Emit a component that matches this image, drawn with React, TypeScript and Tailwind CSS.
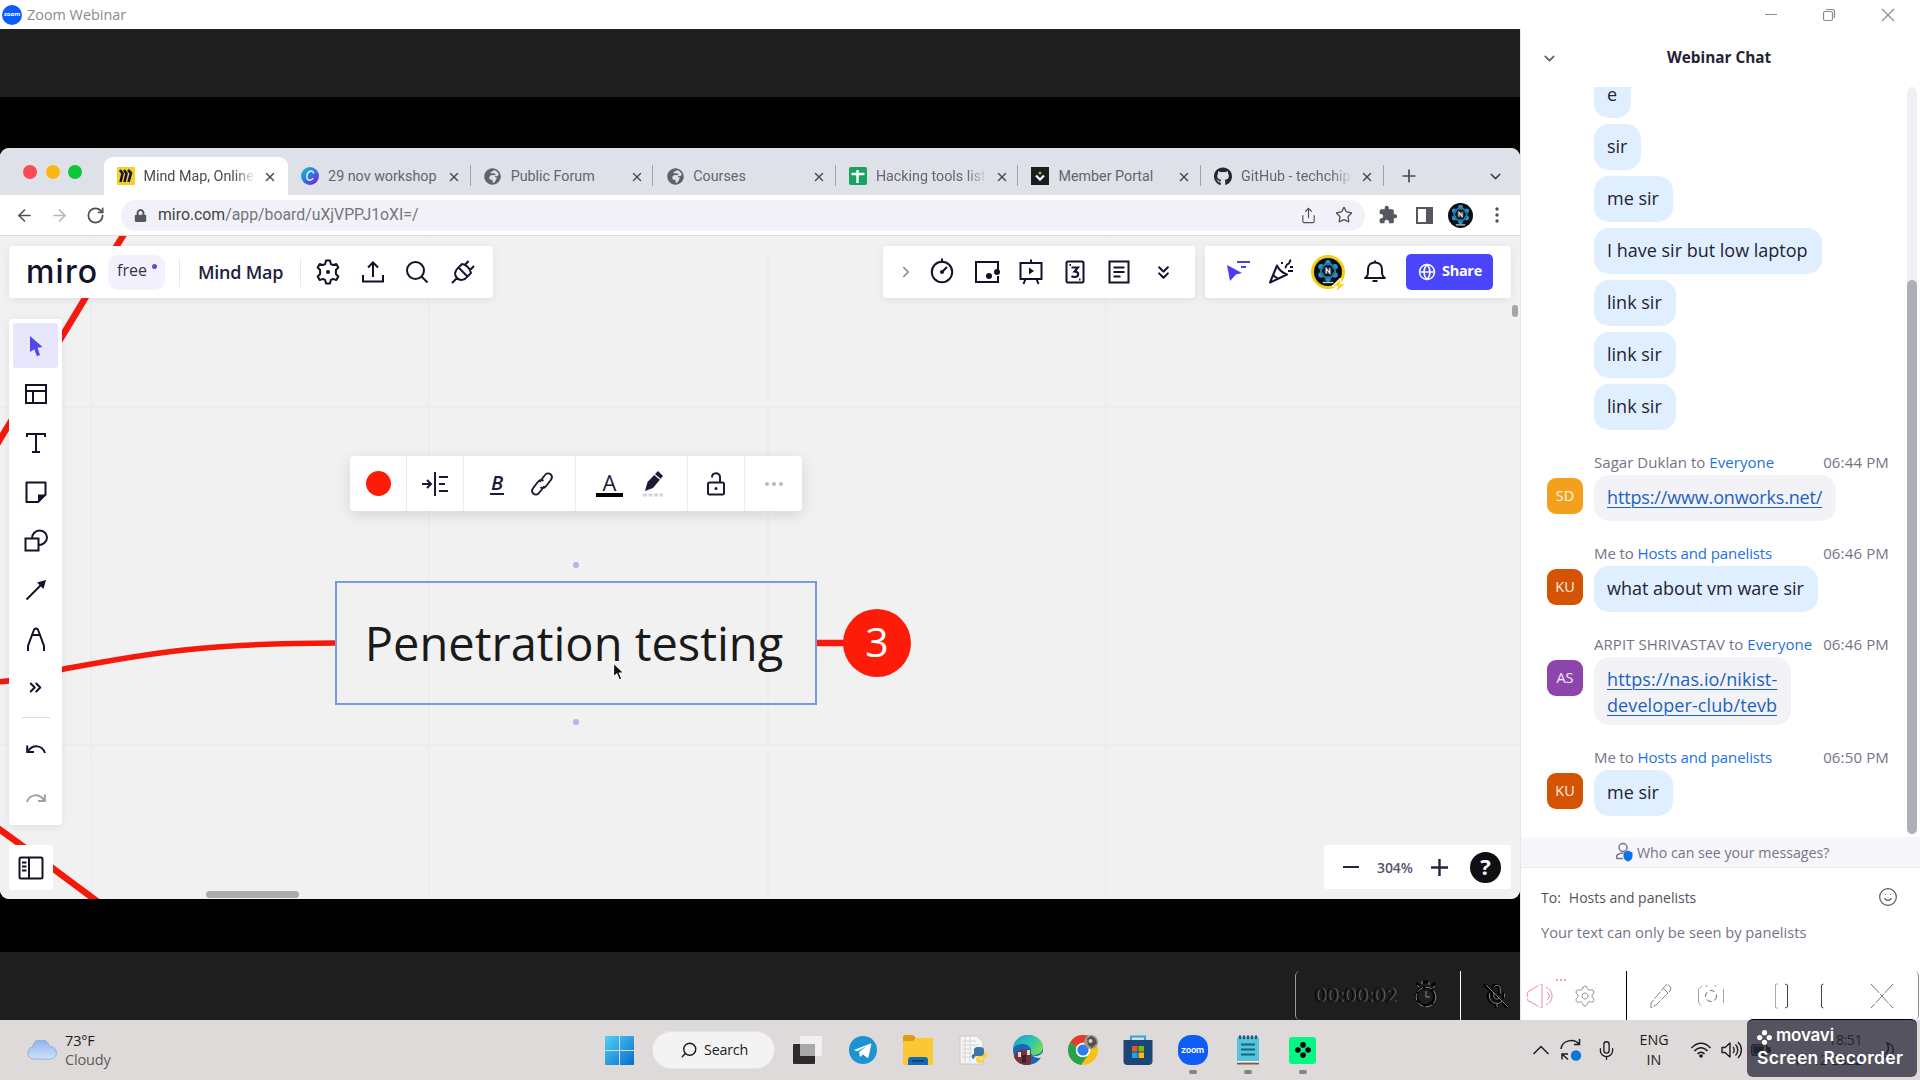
import React from "react";
import {
  ArrowLeft,
  ArrowRight,
  ChevronDown,
  ChevronRight,
  ChevronsDown,
  ChevronsRight,
  Globe,
  Link,
  Mic,
  MicOff,
  Plus,
  RotateCw,
  Search,
  Settings,
  Share,
  Smile,
  Star,
  Volume2,
  X,
} from "lucide-react";
import { FaGithub, FaGlobeAfrica, FaLock } from "react-icons/fa";
import { MdExtension } from "react-icons/md";

type IconProps = { w?: number; h?: number; className?: string; children: React.ReactNode; sw?: number };

function Svg({ w = 24, h = 24, className = "", sw = 2, children }: IconProps) {
  return (
    <svg
      width={w}
      height={h}
      viewBox={`0 0 ${w} ${h}`}
      fill="none"
      stroke="currentColor"
      strokeWidth={sw}
      className={`shrink-0 ${className}`}
    >
      {children}
    </svg>
  );
}

/* ---------- Title bar ---------- */

function TitleBar() {
  return (
    <div className="flex h-[29px] shrink-0 items-center bg-white pl-0.5 text-[#8b8b8b]">
      <div className="flex size-5 items-center justify-center rounded-full bg-[#0b5cff] text-[6px] font-bold text-white">
        zoom
      </div>
      <span className="mt-px ml-[5px] text-[14.4px] leading-none">Zoom Webinar</span>
      <div className="ml-auto flex items-center pr-[25px]">
        <Svg w={12} h={12} sw={1}>
          <path d="M0 5.500h12" />
        </Svg>
        <Svg w={14} h={14} sw={1.2} className="ml-[45px]">
          <rect x="1.500" y="3.500" width="9" height="9" rx="1.500" />
          <path d="M4 1.500h6.500a2 2 0 0 1 2 2V10" />
        </Svg>
        <Svg w={14} h={14} sw={1.2} className="ml-[45px]">
          <path d="M1 1l12 12M13 1L1 13" />
        </Svg>
      </div>
    </div>
  );
}

/* ---------- Shared browser ---------- */

function MiroFavicon() {
  return (
    <Svg w={18} h={18}>
      <rect width="18" height="18" rx="1" fill="#f5d127" stroke="none" />
      <path d="M3 3l2.500 3.500L3.500 15M7 3l2.500 3.500L7.500 15M11 3l3 3-2.500 9" stroke="#1a1428" strokeWidth="2.600" />
    </Svg>
  );
}

function CanvaFavicon() {
  return (
    <Svg w={18} h={18}>
      <defs>
        <linearGradient id="canva" x1="0" y1="0" x2="0.800" y2="1">
          <stop offset="0" stopColor="#0fc0cc" />
          <stop offset="0.450" stopColor="#2586dd" />
          <stop offset="1" stopColor="#7a1ee0" />
        </linearGradient>
      </defs>
      <circle cx="9" cy="9" r="9" fill="url(#canva)" stroke="none" />
      <path d="M12.500 6.500c.2-1.800-1.200-2.600-2.800-2.300-2.700.4-4.300 3.600-3.900 6.300.4 2.900 4 3.700 6.500.8" stroke="#c9ecff" strokeWidth="1.700" />
    </Svg>
  );
}

function SheetsFavicon() {
  return (
    <Svg w={18} h={18}>
      <rect width="18" height="18" rx="2" fill="#16a362" stroke="none" />
      <path d="M2.500 7h13M8.500 3v13" stroke="#fff" strokeWidth="2.400" />
    </Svg>
  );
}

function PortalFavicon() {
  return (
    <Svg w={18} h={18}>
      <rect width="18" height="18" fill="#1d1d1f" stroke="none" />
      <path d="M5 8.500l4 4 4-4" stroke="#f0f0f0" strokeWidth="2.400" />
      <circle cx="9" cy="6" r="1.500" fill="#c9a24a" stroke="none" />
    </Svg>
  );
}

const tabs = [
  { title: "Mind Map, Online", icon: <MiroFavicon />, active: true, fade: true },
  { title: "29 nov workshop", icon: <CanvaFavicon /> },
  { title: "Public Forum", icon: <FaGlobeAfrica size={17} color="#5f6368" /> },
  { title: "Courses", icon: <FaGlobeAfrica size={17} color="#5f6368" /> },
  { title: "Hacking tools list", icon: <SheetsFavicon />, fade: true },
  { title: "Member Portal", icon: <PortalFavicon /> },
  { title: "GitHub - techchip", icon: <FaGithub size={19} color="#24292f" />, fade: true },
];

function TabStrip() {
  return (
    <div className="flex h-[47px] shrink-0 items-end bg-[#dee1e8] font-[Roboto,sans-serif]">
      <div className="mb-4 ml-[23px] flex w-[80.500px] gap-[8.500px]">
        <span className="size-[14px] rounded-full bg-[#fb4a50]" />
        <span className="size-[14px] rounded-full bg-[#fdb714]" />
        <span className="size-[14px] rounded-full bg-[#0fc53a]" />
      </div>
      {tabs.map((t, i) => (
        <div
          key={t.title}
          className={`relative flex h-[38px] shrink-0 items-center ${
            t.active ? "w-[184.600px] rounded-t-[9px] bg-white pl-[13px]" : "w-[182.600px] pl-[13px]"
          }`}
        >
          <span className="flex w-[18px] shrink-0 justify-center">{t.icon}</span>
          <span
            className={`mt-px ml-[9px] w-[111px] overflow-hidden text-[14.300px] whitespace-nowrap ${
              t.active ? "text-[#4a4b52]" : "text-[#63666d]"
            } ${t.fade ? "[mask-image:linear-gradient(to_right,black_82%,transparent)]" : ""}`}
          >
            {t.title}
          </span>
          <X size={14} strokeWidth={2.400} className="mt-px ml-[8px] shrink-0 text-[#46494f]" />
          {i > 0 && <span className="absolute top-2 right-0 h-[21px] w-px bg-[#a0a3a9]" />}
        </div>
      ))}
      <Plus size={20} strokeWidth={2} className="mb-[9px] ml-[15px] text-[#46494f]" />
      <ChevronDown size={17} strokeWidth={2.200} className="mb-[10px] ml-[68px] text-[#46494f]" />
    </div>
  );
}

function ProfileEmblem({ size }: { size: number }) {
  return (
    <svg width={size} height={size} viewBox="0 0 24 24" className="shrink-0">
      <circle cx="12" cy="12" r="12" fill="#0b0e13" />
      <g fill="#2596cf">
        <circle cx="12" cy="4" r="2.300" />
        <circle cx="18" cy="7.500" r="2.300" />
        <circle cx="18" cy="14.500" r="2.300" />
        <circle cx="12" cy="18" r="2.300" />
        <circle cx="6" cy="14.500" r="2.300" />
        <circle cx="6" cy="7.500" r="2.300" />
      </g>
      <circle cx="12" cy="11" r="6" fill="none" stroke="#1f78a8" strokeWidth="1.800" />
      <rect x="9" y="8" width="6" height="6" fill="#3a444d" />
      <path d="M10.500 13V9l3 4V9" fill="none" stroke="#e9eef2" strokeWidth="1" />
      <path d="M7.500 21h9" stroke="#c5ccd2" strokeWidth="1.200" />
    </svg>
  );
}

function AddressBar() {
  return (
    <div className="flex h-[41px] shrink-0 items-center border-b border-[#dcdce0] bg-white pl-[15px] text-[#4d5056]">
      <ArrowLeft size={19} />
      <ArrowRight size={19} className="ml-[16px] text-[#b4b6ba]" />
      <RotateCw size={19} strokeWidth={2.200} className="ml-[17px]" />
      <div className="ml-[16px] flex h-[31px] w-[1244px] items-center rounded-full bg-[#f1f1f7] pr-[12px] pl-[13px]">
        <FaLock size={13} color="#55585e" />
        <span className="ml-[11px] font-[Roboto,sans-serif] text-[15.800px] whitespace-nowrap text-[#73767c]">
          <span className="text-[#404248]">miro.com</span>/app/board/uXjVPPJ1oXI=/
        </span>
        <Share size={17} strokeWidth={1.600} className="ml-auto" />
        <Star size={18} strokeWidth={1.800} className="ml-[18px]" />
      </div>
      <MdExtension size={20} className="ml-[13px]" color="#55585e" />
      <Svg w={17} h={17} className="ml-[18px] text-[#55585e]">
        <rect x="1" y="1" width="15" height="15" />
        <path d="M10 1h6v15h-6z" fill="currentColor" stroke="none" />
      </Svg>
      <span className="ml-[15px]">
        <ProfileEmblem size={25} />
      </span>
      <Svg w={6} h={18} className="ml-[21px]">
        <g fill="currentColor" stroke="none">
          <circle cx="3" cy="3" r="1.700" />
          <circle cx="3" cy="9" r="1.700" />
          <circle cx="3" cy="15" r="1.700" />
        </g>
      </Svg>
    </div>
  );
}

/* ---------- Miro board ---------- */

function BoardLines() {
  return (
    <svg width="1520" height="663" viewBox="0 236 1520 663" className="absolute inset-0" fill="none">
      <g stroke="#ececee" strokeWidth="1.500">
        <path d="M91 235V899M429 235V899M768 235V899M1106 235V899M0 407H1520M0 745H1520" />
      </g>
      <g stroke="#f5190c" strokeWidth="6.500">
        <path d="M126 231C105 264 88 294 58 343C40 374 22 403 -4 446" />
        <path d="M-2 682C20 680 45 674 64 669C140 655 200 643 336 643" strokeWidth="5.500" />
        <path d="M-4 827C30 851 60 874 98 902" />
        <path d="M817 643H850" />
      </g>
    </svg>
  );
}

function FileBar() {
  return (
    <div className="absolute top-[10px] left-[9px] flex h-[52px] w-[484px] items-center rounded-[3px] bg-white text-[#12122a] shadow-[0_2px_8px_rgba(5,0,56,0.07)]">
      <span className="ml-[17px] w-[73px] font-[Inter,sans-serif] text-[32px] leading-none font-medium tracking-[1.200px]">
        miro
      </span>
      <div className="relative ml-[9px] flex h-[35px] w-[57px] items-center rounded-[10px] bg-[#f3f1fb] pl-[9px]">
        <span className="-mt-1 text-[16px] font-medium text-[#33334d]">free</span>
        <span className="absolute top-[9px] right-[8px] size-[5px] rounded-full bg-[#5a4ce0]" />
      </div>
      <span className="ml-[14px] h-[29px] w-px bg-[#e9e9ef]" />
      <span className="ml-[18px] w-[85px] text-[18px] font-semibold tracking-[-0.250px] whitespace-nowrap text-[#22223a]">
        Mind Map
      </span>
      <span className="ml-[17px] h-[29px] w-px bg-[#e9e9ef]" />
      <Svg w={24} h={26} className="ml-[15px]">
        <path
          d="M10 1.500h4l.8 3.400 2.200 1.200 3.300-1.200 2 3.600-2.400 2.500v4l2.400 2.500-2 3.600-3.300-1.200-2.200 1.200-.8 3.400h-4l-.8-3.400L7 19.900l-3.300 1.200-2-3.600L4.100 15v-4L1.700 8.500l2-3.600L7 6.100l2.200-1.200z"
          strokeLinejoin="round"
        />
        <circle cx="12" cy="13" r="2" fill="currentColor" stroke="none" />
      </Svg>
      <Svg w={24} h={24} className="ml-[21px]">
        <path d="M2 15v6.500h20V15M12 17V3M7 7.500L12 2.500l5 5" />
      </Svg>
      <Svg w={24} h={24} className="ml-[20px]">
        <circle cx="10.500" cy="10.500" r="8.500" />
        <path d="M16.500 16.500l6 6" />
      </Svg>
      <Svg w={26} h={26} className="ml-[21px]">
        <path d="M8.500 8.500l9 9c-3 4-7.500 4.500-10.500 1.500s-2.500-7.500 1.500-10.500zM8.500 8.500L12 5c4 .5 8.500 4.500 9 9l-3.500 3.500M7 19l-5 5M14.500 6.500l4-4.500M19.500 11.500l4.500-4.500" />
      </Svg>
    </div>
  );
}

function ToolsBar() {
  return (
    <div className="absolute top-[10px] left-[883px] flex h-[52px] w-[312px] items-center rounded-[3px] bg-white text-[#12122a] shadow-[0_2px_8px_rgba(5,0,56,0.07)]">
      <ChevronRight size={18} className="ml-[14px] text-[#85858f]" />
      <Svg w={24} h={26} className="-mt-0.5 ml-[15px]">
        <circle cx="12" cy="14" r="10.200" />
        <path d="M12 0.500v4M12 14l5-5" />
        <circle cx="12" cy="14" r="2" fill="currentColor" stroke="none" />
      </Svg>
      <Svg w={26} h={24} className="ml-[20px]">
        <path d="M24 16v6H2V2h22v9" />
        <circle cx="15" cy="16" r="3" fill="currentColor" stroke="none" />
        <circle cx="23" cy="12" r="3" fill="currentColor" stroke="none" />
      </Svg>
      <Svg w={24} h={26} className="ml-[19px]">
        <rect x="1.500" y="4" width="21" height="16" />
        <path d="M12 0.500V4M6.500 20l-2 5M17.500 20l2 5" />
        <path d="M10 8.500l5 3.500-5 3.500z" fill="currentColor" stroke="none" />
      </Svg>
      <Svg w={20} h={24} className="ml-[22px]">
        <rect x="1.500" y="1.500" width="17" height="21" rx="1.500" />
        <path d="M6.500 7.500H13l-3.500 4c5 0 5 5.500 0 5.500-1.500 0-2.500-.5-3-1" />
        <path d="M4.500 5h1.500M14 19.500h1.500" />
      </Svg>
      <Svg w={22} h={24} className="ml-[23px]">
        <rect x="1.500" y="1.500" width="19" height="21" />
        <path d="M5.500 7.500h11M5.500 12h11M5.500 16.500h7" />
      </Svg>
      <ChevronsDown size={21} strokeWidth={2.400} className="ml-[23px]" />
    </div>
  );
}

function ShareBar() {
  return (
    <div className="absolute top-[10px] left-[1205px] flex h-[52px] w-[306px] items-center rounded-[3px] bg-white text-[#12122a] shadow-[0_2px_8px_rgba(5,0,56,0.07)]">
      <Svg w={24} h={22} className="-mt-0.5 ml-[21px] text-[#4a3ff0]">
        <path d="M1 5l15 8-6 1.500L4 21z" fill="currentColor" stroke="none" />
        <path d="M11 2h13M15 7h5" />
      </Svg>
      <Svg w={26} h={26} className="ml-[18px]">
        <path d="M9 6.500l-7 17 17-8c-4-1.500-8-4.500-10-9zM5 16l5 4M17 9c1.500-1 1-4 3-4s1-3 3-4" strokeLinejoin="round" />
        <path d="M20 12h5M22 8h3M14 3v2" />
      </Svg>
      <div className="relative ml-[17px] flex size-[34px] items-center justify-center rounded-full bg-[#f2d013]">
        <ProfileEmblem size={28} />
        <svg width="14" height="15" viewBox="0 0 13 14" className="absolute -right-px -bottom-1">
          <path d="M8 0L0 8h5l-2 6 10-9H8z" fill="#ffd52a" stroke="#fff" strokeWidth="1" />
        </svg>
      </div>
      <Svg w={22} h={24} className="ml-[19px]">
        <path d="M1 18c3-2 3-3 3-8.500C4 5 7 2.500 11 2.500s7 2.500 7 7c0 5.500 0 6.500 3 8.500zM8.500 21h5" strokeLinejoin="round" />
        <path d="M11 0.500v2" />
      </Svg>
      <div className="ml-[20px] flex h-[36px] w-[87px] items-center rounded-[5px] bg-[#4a45fb] pl-[12px] text-white">
        <Globe size={18} strokeWidth={2} />
        <span className="-mt-0.5 ml-[6px] text-[14.500px] font-bold tracking-[-0.3px]">Share</span>
      </div>
    </div>
  );
}

const sideIcons = [
  <Svg w={22} h={20}>
    <path d="M1 1h20v18H1zM1 7h20M8 7v12" />
  </Svg>,
  <Svg w={22} h={22}>
    <path d="M2 5V2h18v3M11 2v18M7 20h8" />
  </Svg>,
  <Svg w={22} h={22}>
    <path d="M13 21H1.500V1.500h19V13.500z" strokeLinejoin="round" />
    <path d="M13 21.500v-8h8z" fill="currentColor" stroke="none" />
  </Svg>,
  <Svg w={24} h={24}>
    <path d="M1.500 9.500h13v12h-13zM8 9.500c0-4.500 3.500-8 7.500-8s7.500 3 7.500 7-4 7.500-8 7.500" />
  </Svg>,
  <Svg w={22} h={22}>
    <path d="M1.500 20.500L17 5" />
    <path d="M21 1l-2.500 9-6.500-6.500z" fill="currentColor" stroke="none" />
  </Svg>,
  <Svg w={20} h={26}>
    <path d="M2 25v-5l5.500-15c.8-3.500 4.200-3.500 5 0L18 20v5M6.500 9h7" />
  </Svg>,
  <ChevronsRight size={19} strokeWidth={2.500} />,
];

function SideToolbar() {
  return (
    <div className="absolute top-[83px] left-[9px] flex h-[506px] w-[53px] flex-col items-center rounded-[3px] bg-white pt-1 text-[#12122a] shadow-[0_2px_8px_rgba(5,0,56,0.07)]">
      <div className="flex h-[45px] w-[45px] items-center justify-center rounded-[3px] bg-[#e6e6fc]">
        <Svg w={14} h={22} className="text-[#5546e8]">
          <path d="M1 1l12.500 11-5 .7L11 20l-3 1.200-2.800-7L1 17z" fill="currentColor" stroke="none" />
        </Svg>
      </div>
      <div className="mt-px flex flex-col items-center">
        {sideIcons.map((icon, i) => (
          <div key={i} className="flex h-[49px] items-center">
            {icon}
          </div>
        ))}
      </div>
      <span className="mt-[5px] h-px w-[28px] shrink-0 bg-[#dcdce2]" />
      <div className="mt-[6px] flex h-[49px] items-center">
        <Svg w={20} h={12}>
          <path d="M2 8c5-6.500 14-6.500 17 2M1.200 2.500V9H8" />
        </Svg>
      </div>
      <div className="flex h-[49px] items-center text-[#a0a0aa]">
        <Svg w={20} h={12}>
          <path d="M18 8C13 1.500 4 1.500 1 10M18.800 2.500V9H12" />
        </Svg>
      </div>
    </div>
  );
}

function ContextBar() {
  return (
    <div className="absolute top-[220px] left-[350px] flex h-[55px] w-[452px] rounded-[4px] bg-white text-[#1b1b35] shadow-[0_4px_14px_rgba(5,0,56,0.12)]">
      <div className="flex w-[57px] items-center justify-center border-r border-[#ececf0]">
        <span className="size-[25px] rounded-full bg-[#fc1c08]" />
      </div>
      <div className="flex w-[57px] items-center justify-center border-r border-[#ececf0]">
        <Svg w={26} h={24}>
          <path d="M0 12h8M5 8l4 4-4 4M13 0v24M17 5h9M17 12h6M17 19h9" />
        </Svg>
      </div>
      <div className="flex w-[112px] items-center border-r border-[#ececf0] pl-[26px]">
        <span className="border-b-2 border-current px-px text-[20px] leading-[20px] font-semibold italic">B</span>
        <Svg w={22} h={24} className="ml-[27px]" sw={1.900}>
          <path d="M8.500 10l5.500-7c1.500-2 4-2 5.500-.7s1.800 3.700.3 5.700l-5 6.500c-1.500 1.800-3.600 1.900-5.300.7M13.500 14l-5.500 7c-1.500 2-4 2-5.500.7s-1.800-3.700-.3-5.700l5-6.500c1.500-1.800 3.600-1.900 5.300-.7" />
        </Svg>
      </div>
      <div className="flex w-[112px] items-center border-r border-[#ececf0] pl-[20px]">
        <span className="w-[27px] border-b-[4px] border-black text-center text-[22px] leading-[22px] font-medium">A</span>
        <Svg w={22} h={26} className="ml-[19px]">
          <path d="M16 0l5 5-10 12-8 3 2.500-9z" fill="currentColor" stroke="none" />
          <path d="M12.500 3.500l6 5" stroke="#fff" strokeWidth="1.200" />
          <path d="M1 24h20" stroke="#d3d3d9" strokeWidth="3" strokeDasharray="4 1.500" />
        </Svg>
      </div>
      <div className="flex w-[57px] items-center justify-center border-r border-[#ececf0]">
        <Svg w={18} h={24}>
          <rect x="1" y="10.500" width="16" height="12" rx="1.500" />
          <path d="M5 5.500C5 0 13 0 13 5v5.500" />
          <circle cx="9" cy="16.500" r="1.500" fill="currentColor" stroke="none" />
        </Svg>
      </div>
      <div className="flex flex-1 items-center justify-center gap-[3px]">
        <span className="size-[4px] rounded-full bg-[#b9b9c3]" />
        <span className="size-[4px] rounded-full bg-[#b9b9c3]" />
        <span className="size-[4px] rounded-full bg-[#b9b9c3]" />
      </div>
    </div>
  );
}

function Board() {
  return (
    <div className="relative h-[663px] overflow-hidden bg-[#f1f1f2]">
      <BoardLines />
      <FileBar />
      <ToolsBar />
      <ShareBar />
      <span className="absolute top-[69px] right-[2px] h-[12px] w-[6px] rounded-full bg-[#a5a5a8]" />
      <SideToolbar />
      <ContextBar />

      <span className="absolute top-[326px] left-[573px] size-[6px] rounded-full bg-[#b7b2e8]" />
      <span className="absolute top-[483px] left-[573px] size-[6px] rounded-full bg-[#b7b2e8]" />
      <div className="absolute top-[345px] left-[335px] flex h-[124px] w-[482px] items-center justify-center border-2 border-[#7b9ae3] pr-[4px] text-[47px] leading-none whitespace-nowrap text-[#1a1a1a]">
        <span>Penetration testing</span>
      </div>
      <div className="absolute top-[373px] left-[843px] flex size-[68px] items-center justify-center rounded-full bg-[#fc1c08] pb-[3px] text-[41px] leading-none text-white">
        3
      </div>
      <svg width="14" height="20" viewBox="0 0 14 20" className="absolute top-[426px] left-[612px]">
        <path d="M1.500 1v14l3.300-3 2.500 6 2.600-1.100-2.500-5.800H12z" fill="#111" stroke="#fff" strokeWidth="1.200" />
      </svg>

      <div className="absolute top-[609px] left-[9px] flex h-[45px] w-[44px] items-center justify-center rounded-[3px] bg-white text-[#12122a]">
        <Svg w={26} h={24}>
          <rect x="1.500" y="1.500" width="23" height="21" rx="1.500" />
          <path d="M11 1.500v21M4 6.500h4.500M4 10.500h4.500M4 14.500h4.500" />
        </Svg>
      </div>
      <span className="absolute top-[655px] left-[206px] h-[7px] w-[93px] rounded-full bg-[#ababad]" />
      <div className="absolute top-[609px] left-[1324px] flex h-[44px] w-[187px] items-center rounded-[3px] bg-white text-[#24243c]">
        <span className="ml-[19px] h-[2.500px] w-[16px] bg-current" />
        <span className="ml-[18px] w-[37px] text-[14px] font-semibold tracking-[-0.1px] text-[#55556a]">304%</span>
        <Svg w={17} h={17} className="ml-[17px]" sw={2.400}>
          <path d="M8.500 0v17M0 8.500h17" />
        </Svg>
        <span className="ml-[22px] flex size-[31px] items-center justify-center rounded-full bg-[#101012] pb-px text-[22px] font-bold text-white">
          ?
        </span>
      </div>
    </div>
  );
}

function SharedScreen() {
  return (
    <div className="flex w-[1520px] shrink-0 flex-col bg-black">
      <div className="h-[68px] bg-[#1e1e1e]" />
      <div className="mt-[51px] overflow-hidden rounded-[9px] bg-[#f1f1f2]">
        <TabStrip />
        <AddressBar />
        <Board />
      </div>
      <div className="mt-auto h-[68px] bg-[#1e1e1e]" />
    </div>
  );
}

/* ---------- Chat ---------- */

function Bubble({ children, className = "" }: { children: React.ReactNode; className?: string }) {
  return (
    <div className={`w-fit rounded-[15px] pr-[14px] pl-[13px] text-[18px] leading-[25.500px] whitespace-nowrap ${className}`}>
      {children}
    </div>
  );
}

type Message = {
  from: string;
  to: string;
  time: string;
  initials: string;
  avatar: string;
  lines: string[];
  link?: boolean;
};

const messages: Message[] = [
  {
    from: "Sagar Duklan to",
    to: "Everyone",
    time: "06:44 PM",
    initials: "SD",
    avatar: "bg-[#f5a01b]",
    lines: ["https://www.onworks.net/"],
    link: true,
  },
  {
    from: "Me to",
    to: "Hosts and panelists",
    time: "06:46 PM",
    initials: "KU",
    avatar: "bg-[#d45404]",
    lines: ["what about vm ware sir"],
  },
  {
    from: "ARPIT SHRIVASTAV to",
    to: "Everyone",
    time: "06:46 PM",
    initials: "AS",
    avatar: "bg-[#8e44ad]",
    lines: ["https://nas.io/nikist-", "developer-club/tevb"],
    link: true,
  },
  {
    from: "Me to",
    to: "Hosts and panelists",
    time: "06:50 PM",
    initials: "KU",
    avatar: "bg-[#d45404]",
    lines: ["me sir"],
  },
];

function Chat() {
  return (
    <div className="flex w-[400px] flex-col border-l border-[#e6e6ea] bg-white">
      <div className="flex h-[58px] shrink-0 items-center">
        <ChevronDown size={17} strokeWidth={2.400} className="ml-[20px] text-[#5f6070]" />
        <span className="-mt-0.5 ml-[109px] text-[15.300px] font-bold text-[#232333]">Webinar Chat</span>
      </div>

      <div className="flex h-[750px] shrink-0 overflow-hidden">
        <div className="flex w-[386px] shrink-0 flex-col">
          <div className="-mt-[15px] ml-[73px] flex flex-col gap-[6px] text-[#232333]">
            {["e", "sir", "me sir", "I have sir but low laptop", "link sir", "link sir", "link sir"].map((m, i) => (
              <Bubble key={i} className="bg-[#e0efff] pt-[10px] pb-[10.500px]">
                {m}
              </Bubble>
            ))}
          </div>
          {messages.map((m, i) => (
            <div key={i} className="mt-[20px]">
              <div className="ml-[73px] flex h-[25px] w-[295px] items-center justify-between text-[15px] leading-none whitespace-nowrap text-[#747487]">
                <span className={m.to === "Everyone" ? "tracking-[0.050px]" : "tracking-[-0.1px]"}>
                  {m.from} <span className="text-[#1f71dd]">{m.to}</span>
                </span>
                <span className="tracking-[0.150px]">{m.time}</span>
              </div>
              <div className="flex pl-[26px]">
                <span
                  className={`mt-[3px] mr-[11px] flex size-9 items-center justify-center rounded-[9px] text-[14.500px] text-white/90 ${m.avatar}`}
                >
                  {m.initials}
                </span>
                <Bubble
                  className={`pt-[10px] ${m.lines.length > 1 ? "pb-[7px] tracking-[0.1px]" : "pb-[10.500px]"} ${
                    m.link ? "bg-[#f2f2f7] text-[#1b63c0]" : "bg-[#e0efff] text-[#232333]"
                  } ${m.link && m.lines.length === 1 ? "tracking-[-0.150px]" : ""}`}
                >
                  {m.lines.map((l) => (
                    <div key={l} className={m.link ? "underline decoration-1 underline-offset-[3px]" : ""}>
                      {l}
                    </div>
                  ))}
                </Bubble>
              </div>
            </div>
          ))}
        </div>
        <div className="h-[748px] w-[10px] rounded-full bg-[#f1f1f5] pt-[193px]">
          <div className="h-[554px] rounded-full bg-[#aeb0b8]" />
        </div>
      </div>

      <div className="flex h-[31px] shrink-0 items-center border-b border-[#e8e8ef] bg-[#f7f7fb] pl-[94px] text-[14.200px] text-[#747487]">
        <Svg w={18} h={20} sw={1.500}>
          <circle cx="8" cy="5.500" r="4" />
          <path d="M8 16.500H2c-1.500-3 1.500-5.500 6-5.500" />
          <path d="M13 8.500l4.500 2v4c0 2.500-2 4-4.500 5-2.500-1-4.500-2.500-4.500-5v-4z" fill="#0e71eb" stroke="none" />
        </Svg>
        <span className="mt-px ml-[4px]">Who can see your messages?</span>
      </div>
      <div className="flex items-center pt-[19px] pr-[22px] pl-[20px] text-[14px] leading-[22px] text-[#52525e]">
        <span>To:</span>
        <span className="ml-[8px]">Hosts and panelists</span>
        <Smile size={20} strokeWidth={1.400} className="-mt-0.5 ml-auto" />
      </div>
      <div className="pt-[12px] pl-[20px] text-[14.700px] leading-[22px] text-[#747487]">
        Your text can only be seen by panelists
      </div>
    </div>
  );
}

/* ---------- Recorder overlay ---------- */

function RecorderBar() {
  return (
    <div className="absolute top-[971px] left-[1295px] flex h-[49px] w-[624px] items-center rounded-[5px] border-x border-l-[#9a9a9a] border-r-[#8c8c8c]">
      <span className="ml-[19px] w-[85px] font-[Inter,sans-serif] text-[18.500px] tracking-[0.2px] text-[#1e1e1e] [text-shadow:-1px_0_0_#000,1px_0_0_#6a6a6a]">
        00:00:02
      </span>
      <Svg w={24} h={28} sw={1} className="-mt-1 ml-[14px] text-[#8a8a8a]">
        <circle cx="11.500" cy="16.500" r="9" stroke="#000" strokeWidth="3" />
        <path d="M5 6L2 3M18 6l3-3M9 2h5" stroke="#000" strokeWidth="3" />
        <circle cx="12" cy="17" r="9.800" strokeDasharray="7 2" />
        <path d="M12 11v6h4M8 1v3M15 2v3M3 5l2 2M21 6l-2 2" />
      </Svg>
      <span className="ml-[22px] h-full w-px bg-white" />
      <span className="relative ml-[22px]">
        <MicOff size={26} strokeWidth={3} className="text-black" />
        <MicOff size={26} strokeWidth={0.800} className="absolute top-0 left-px text-[#9a9a9a]" />
      </span>
      <Svg w={28} h={26} sw={1} className="ml-[17px] text-[#e98aac]">
        <path d="M5 7L2 8.500Q0.500 13 2 18l3 1M5 7l10-6M5 19l10 6" strokeDasharray="9 1.500" />
        <path d="M16 1v24M21 9c3 2 3 6 0 8M20 4c8 4 8 14 0 18" />
      </Svg>
      <Settings size={24} strokeWidth={0.900} strokeDasharray="2.500 1" className="ml-[19px] text-[#777]" />
      <span className="ml-[29px] h-full w-px bg-black" />
      <Svg w={22} h={26} sw={0.900} className="ml-[23px] text-[#777]">
        <path d="M1 25V20L16 2l2-1 3 4-1 3L6 22zM13 5l5 5" strokeDasharray="9 1.500" />
      </Svg>
      <Svg w={28} h={24} sw={0.900} className="ml-[25px] text-[#999]">
        <path d="M5 2L1.500 5v13L4 21.500M26.500 5v14" />
        <circle cx="14" cy="12" r="5.500" strokeDasharray="5 3" stroke="#555" />
        <path d="M9 3l1-2M19 3l-1-2" />
      </Svg>
      <Svg w={16} h={26} sw={1} className="ml-[49px] text-[#444]">
        <path d="M4 1H1.500v24H4" stroke="#aaa" />
        <path d="M11 1l2.500 1v22l-2.500 1" />
      </Svg>
      <Svg w={4} h={26} sw={1} className="ml-[30px] text-[#444]">
        <path d="M3.500 1l-2 1v22l2 1" />
      </Svg>
      <Svg w={24} h={26} sw={0.900} className="ml-[46px] text-[#666]">
        <path d="M1 1l22 24M23 1L1 25" strokeDasharray="12 1.500" />
      </Svg>
      <span className="absolute top-[8px] left-[260px] flex gap-[2px]">
        <i className="size-[2px] bg-[#f0a0bd]" />
        <i className="size-[2px] bg-[#f0a0bd]" />
        <i className="size-[2px] bg-[#f0a0bd]" />
      </span>
    </div>
  );
}

function MovaviMark({ size }: { size: number }) {
  return (
    <svg width={size} height={size} viewBox="0 0 16 16" fill="currentColor" className="shrink-0">
      <circle cx="8" cy="2.900" r="2.800" />
      <circle cx="8" cy="13.100" r="2.800" />
      <circle cx="2.900" cy="8" r="2.800" />
      <circle cx="13.100" cy="8" r="2.800" />
    </svg>
  );
}

function MovaviBadge() {
  return (
    <div className="absolute top-[1019px] left-[1747px] flex h-[58px] w-[170px] flex-col rounded-[6px] border-t border-black bg-[#262635]/75 pl-[10px] font-[Inter,sans-serif] font-semibold text-white">
      <div className="mt-[5px] flex h-[24px] items-center">
        <MovaviMark size={15} />
        <span className="-mt-[3px] ml-[4px] text-[17px] leading-none tracking-[-0.2px]">movavi</span>
      </div>
      <span className="mt-[-2px] text-[17.500px] leading-[22px] tracking-[0.350px] whitespace-nowrap">Screen Recorder</span>
    </div>
  );
}

/* ---------- Taskbar ---------- */

function TelegramIcon() {
  return (
    <svg width="28" height="28" viewBox="0 0 28 28">
      <circle cx="14" cy="14" r="14" fill="#1d93d2" />
      <path
        d="M5.500 13.700l15.500-6c.9-.3 1.500.2 1.200 1.400l-2.600 11.600c-.2 1-.9 1.200-1.700.7l-4-3-2.100 2c-.6.6-1 .2-1.100-.4l-.5-4 7.300-6-8.900 5.200-3.200-1c-.7-.2-.6-.4.1-.5z"
        fill="#fff"
      />
    </svg>
  );
}

function FolderIcon() {
  return (
    <svg width="30" height="30" viewBox="0 0 30 30">
      <path d="M0 2a2 2 0 0 1 2-2h8l3 3h-1v8H0z" fill="#dc9b13" />
      <path d="M0 6h10l3-3h17v27H0z" fill="#fbc835" />
      <path d="M5 30v-5a3 3 0 0 1 3-3h14a3 3 0 0 1 3 3v5z" fill="#1768b6" />
      <path d="M9 26h12" stroke="#0c447e" strokeWidth="2" />
    </svg>
  );
}

function PythonFileIcon() {
  return (
    <svg width="30" height="30" viewBox="0 0 30 30">
      <path d="M2 1h17l6 6v22H2z" fill="#f5f5f5" stroke="#c9c9c9" />
      <path d="M4 6h14M4 10h17M4 14h10M4 18h10M4 22h10M7 2v26M12 2v26" stroke="#d6d6d6" />
      <path d="M16 19v-3c0-2 0-4 5-4 4 0 5 1 5 3v3c0 2-1 3-3 3h-4c-2 0-3 1-3 3-3 0-3-5 0-5z" fill="#3a76a8" />
      <path d="M26 16c4 0 4 6 1 7h-5v1h4c0 3-1 4-4 4s-4-1-4-3c0-3 1-4 3-4h3c2 0 2-2 2-5z" fill="#ffd140" />
    </svg>
  );
}

function EdgeIcon() {
  return (
    <svg width="30" height="30" viewBox="0 0 30 30">
      <defs>
        <linearGradient id="edgeTop" x1="0" y1="0" x2="1" y2="0.600">
          <stop offset="0" stopColor="#1f9bd8" />
          <stop offset="0.600" stopColor="#2fc6b0" />
          <stop offset="1" stopColor="#6fdc52" />
        </linearGradient>
      </defs>
      <circle cx="15" cy="15" r="15" fill="#1668b5" />
      <path d="M0 14C0 6 7 0 15 0c9 0 15 6 15 12 0 5-4 8-9 8-4 0-3-3-3-4 1-3-3-7-8-7-5 0-9 2-10 5z" fill="url(#edgeTop)" />
      <path d="M19 20c4 2 8 1 11-3v5c-4 2-8 1-11-2z" fill="#dddad9" />
      <path d="M1 22c1-4 3-6 5-6l3-2 2 2 3-2 2 3 2 1v11c-6 3-14 0-17-7z" fill="#7a2f38" />
      <path d="M5 17h3v5H5zM14 15h3v5h-3z" fill="#e9d7cb" />
      <path d="M9 20h4v8H9z" fill="#32252b" />
    </svg>
  );
}

function ChromeIcon() {
  return (
    <svg width="30" height="30" viewBox="0 0 30 30">
      <circle cx="15" cy="15" r="15" fill="#fbc116" />
      <path d="M15 15L2 7.500A15 15 0 0 1 28 7.500H15z" fill="#e33b2e" />
      <path d="M15 15L2 7.500A15 15 0 0 0 13 29.900L21.500 18z" fill="#2aa148" />
      <circle cx="15" cy="15" r="7.300" fill="#fff" />
      <circle cx="15" cy="15" r="5.600" fill="#2f7de8" />
      <circle cx="23" cy="7" r="7" fill="#9a9691" />
      <path d="M19 4l4-3 4 2 2 5-5 5-4-3z" fill="#55504e" />
      <circle cx="22.500" cy="6" r="2" fill="#d8d2cd" />
    </svg>
  );
}

function StoreIcon() {
  return (
    <svg width="30" height="30" viewBox="0 0 30 30">
      <path d="M8 7V1.500h14V7" fill="none" stroke="#2ba8ea" strokeWidth="2.200" />
      <path d="M0.500 5h29v21a4 4 0 0 1-4 4h-21a4 4 0 0 1-4-4z" fill="#1e4674" />
      <path d="M9 11h5.500v5.500H9z" fill="#f0502a" />
      <path d="M15.500 11H21v5.500h-5.500z" fill="#7fba00" />
      <path d="M9 17.500h5.500V23H9z" fill="#1fa5ee" />
      <path d="M15.500 17.500H21V23h-5.500z" fill="#fdb913" />
    </svg>
  );
}

function NotepadIcon() {
  return (
    <svg width="24" height="30" viewBox="0 0 24 30">
      <rect x="1" y="2" width="22" height="26" rx="1.500" fill="#56c3dd" />
      <path d="M1 27.500h22v2H1z" fill="#8a5a2c" />
      <path d="M1 26h22v1.500H1z" fill="#f3f3f3" />
      <path d="M4 1.500v1.500M8 1.500v1.500M12 1.500v1.500M16 1.500v1.500M20 1.500v1.500" stroke="#235a70" strokeWidth="2.400" strokeLinecap="round" />
      <path d="M5 9.500h14M5 14.500h14M5 19.500h14" stroke="#15657f" strokeWidth="1.800" />
    </svg>
  );
}

function TaskSlot({ children, running }: { children: React.ReactNode; running?: boolean }) {
  return (
    <div className="relative flex w-[55px] shrink-0 items-center justify-center">
      {children}
      {running && <span className="absolute top-[40px] h-[4px] w-[8px] rounded-full bg-[#858383]" />}
    </div>
  );
}

function Taskbar() {
  return (
    <div className="flex h-[60px] shrink-0 items-center bg-[#dddad9] text-[#1c1c1c]">
      <svg width="31" height="20" viewBox="0 0 31 22" preserveAspectRatio="none" className="ml-[26px]">
        <defs>
          <linearGradient id="cloud" x1="0" y1="0" x2="0" y2="1">
            <stop offset="0" stopColor="#8fb0ea" />
            <stop offset="1" stopColor="#c9e2fb" />
          </linearGradient>
        </defs>
        <path d="M7 21a7 7 0 0 1 0-13.500 8 8 0 0 1 16-.5 7 7 0 0 1 1 14z" fill="url(#cloud)" stroke="#84a5e2" strokeWidth="0.800" />
      </svg>
      <div className="ml-[8px] flex w-[540px] flex-col text-[14.500px] leading-[19.500px] tracking-[-0.150px]">
        <span>73°F</span>
        <span className="text-[#5d5b5b]">Cloudy</span>
      </div>
      <svg width="29" height="29" viewBox="0 0 29 29">
        <defs>
          <linearGradient id="win" x1="0" y1="0" x2="1" y2="1">
            <stop offset="0" stopColor="#4fd0fa" />
            <stop offset="1" stopColor="#0a6cc9" />
          </linearGradient>
        </defs>
        <path
          d="M0 1a1 1 0 0 1 1-1h13v14H0zM15 0h13a1 1 0 0 1 1 1v13H15zM0 15h14v14H1a1 1 0 0 1-1-1zM15 15h14v13a1 1 0 0 1-1 1H15z"
          fill="url(#win)"
        />
      </svg>
      <div className="ml-[18px] flex h-[38px] w-[123px] items-center rounded-full border border-[#e6e4e3] bg-[#f4f3f3] pl-[27px] text-[14.300px] tracking-[-0.2px]">
        <Search size={18} strokeWidth={1.900} className="-scale-x-100" />
        <span className="ml-[6px]">Search</span>
      </div>

      <div className="ml-[5px] flex h-[40px]">
        <TaskSlot>
          <svg width="30" height="28" viewBox="0 0 30 28">
            <rect y="8" width="22" height="20" rx="1" fill="#2c2c2c" />
            <rect x="7" width="22" height="20" rx="1" fill="#f4f4f4" fillOpacity="0.880" />
            <path d="M7 8h15v12H7z" fill="#a9a9a9" />
          </svg>
        </TaskSlot>
        <TaskSlot>
          <TelegramIcon />
        </TaskSlot>
        <TaskSlot>
          <FolderIcon />
        </TaskSlot>
        <TaskSlot>
          <PythonFileIcon />
        </TaskSlot>
        <TaskSlot>
          <EdgeIcon />
        </TaskSlot>
        <TaskSlot>
          <ChromeIcon />
        </TaskSlot>
        <TaskSlot>
          <StoreIcon />
        </TaskSlot>
        <TaskSlot running>
          <span className="flex size-[30px] items-center justify-center rounded-[13px] bg-[#0f5cf5] font-[Inter,sans-serif] text-[9px] font-semibold tracking-[-0.3px] text-white">
            zoom
          </span>
        </TaskSlot>
        <TaskSlot running>
          <NotepadIcon />
        </TaskSlot>
        <TaskSlot running>
          <span className="flex size-[27px] items-center justify-center rounded-[3px] bg-[#05f783] text-black">
            <MovaviMark size={16} />
          </span>
        </TaskSlot>
      </div>

      <Svg w={16} h={10} sw={1.500} className="ml-[203px]">
        <path d="M0.500 9L8 1.500 15.500 9" />
      </Svg>
      <Svg w={22} h={22} sw={1.500} className="ml-[11px]">
        <path d="M1 10C2 1 14-1 19 5M19.500 0v5.500H14M2 20.500V15h6M2.500 15.500L8 20.500" />
        <circle cx="16" cy="16.500" r="5.200" fill="#0c78d6" stroke="none" />
      </Svg>
      <Mic size={21} strokeWidth={1.500} className="ml-[14px]" />
      <div className="ml-[22px] flex w-[30px] flex-col items-center text-[14.300px] leading-[20px] whitespace-nowrap">
        <span>ENG</span>
        <span>IN</span>
      </div>
      <Svg w={22} h={18} sw={1.500} className="ml-[21px]">
        <path d="M1.500 7c5.500-6.500 13.500-6.500 19 0M4.500 10c4-4.500 9-4.500 13 0M7.500 13c2-2.500 5-2.500 7 0" />
        <circle cx="11" cy="15" r="1.800" fill="currentColor" stroke="none" />
      </Svg>
      <Svg w={21} h={18} sw={1.400} className="ml-[9px]">
        <path d="M1 6.500h3L9 2v14l-5-4.500H1zM12 6c1.500 1.500 1.500 4.500 0 6M14.500 3.500c3 3 3 8 0 11M17 1c4.500 4.500 4.500 11.500 0 16" strokeLinejoin="round" />
      </Svg>
      <Svg w={20} h={12} sw={1.500} className="ml-[9px]">
        <rect x="0.800" y="0.800" width="15" height="10.400" rx="2" />
        <path d="M3 3h9v6H3zM17 4h2v4h-2z" fill="currentColor" />
      </Svg>
      <div className="ml-[15px] flex w-[76px] flex-col items-end text-[14px] leading-[20px] tracking-[-0.4px]">
        <span>18:51</span>
        <span>11-12-2022</span>
      </div>
      <Svg w={16} h={16} sw={1.500} className="ml-[18px]">
        <path d="M7 1c8 1 9 13-1 14-2 0-4-1-5-2 7 0 9-6 6-12z" />
      </Svg>
    </div>
  );
}

export default function App() {
  return (
    <div className="relative flex h-[1080px] w-[1920px] flex-col overflow-hidden bg-white font-['Open_Sans',sans-serif]">
      <TitleBar />
      <div className="flex h-[991px] shrink-0">
        <SharedScreen />
        <Chat />
      </div>
      <Taskbar />
      <RecorderBar />
      <MovaviBadge />
    </div>
  );
}
